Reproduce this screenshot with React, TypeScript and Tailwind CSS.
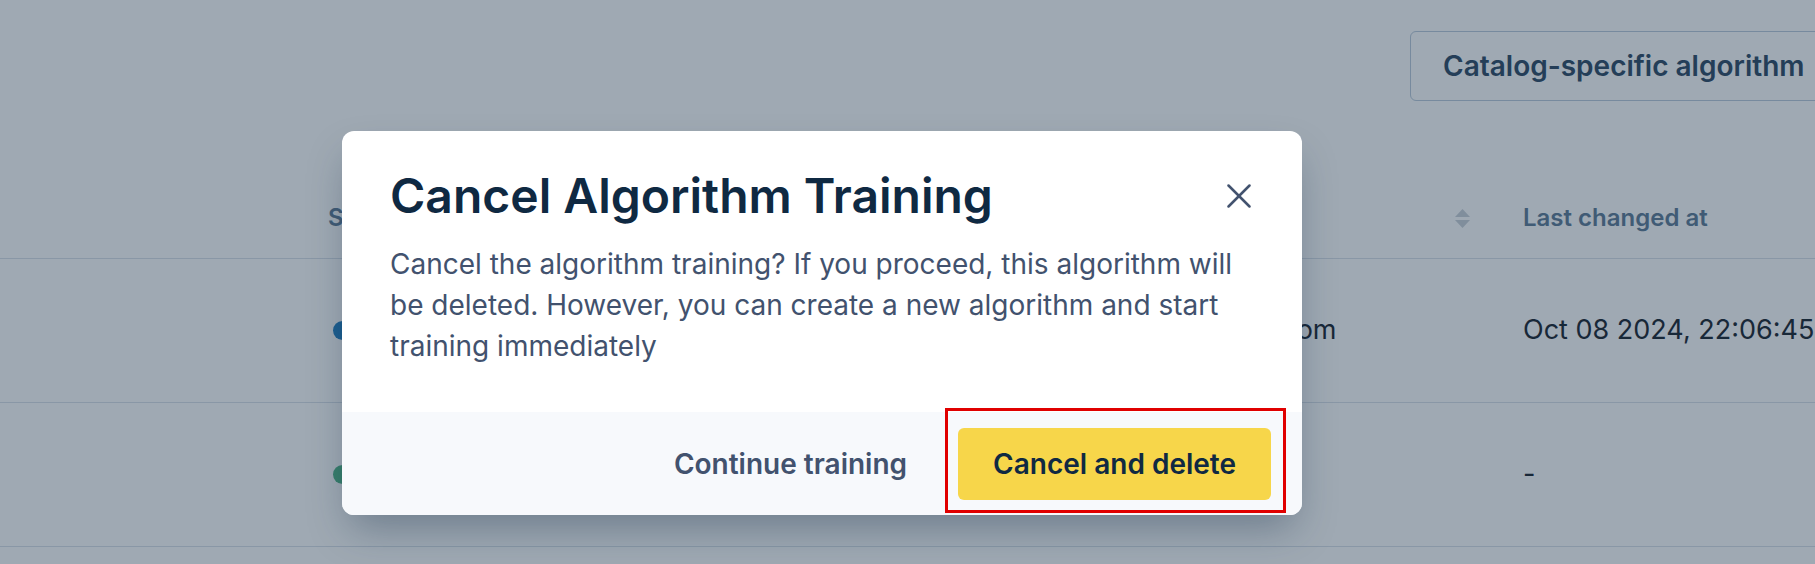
const SortIcon = () => (
    <svg width="15" height="19" viewBox="0 0 15 19" className="shrink-0">
        <path d="M7.5 0 L15 8 L0 8 Z" fill="#cbd2d9" />
        <path d="M7.5 19 L15 11 L0 11 Z" fill="#cbd2d9" />
    </svg>
);

const Row = ({ dot, email, changed }: { dot: string; email: string; changed: string }) => (
    <div className="flex h-[144px] items-center border-b-[1.5px] border-[#dbe2ea] text-[27px] text-[#1f2933]">
        <div className="w-[328px] shrink-0" />
        <div className="flex w-[646px] shrink-0 items-center">
            <span className={`ml-[5px] h-[19px] w-[19px] rounded-full ${dot}`} />
            <span className="ml-3">Training</span>
        </div>
        <div className="w-[549px] shrink-0">{email}</div>
        <div className="shrink-0">{changed}</div>
    </div>
);

const CancelTrainingDialog = () => (
    <div className="w-[960px] overflow-hidden whitespace-normal rounded-[12px] bg-white shadow-[0_20px_40px_-8px_rgba(15,41,66,0.35)]">
        <div className="flex items-center justify-between pl-[48px] pr-[51px] pt-[35px]">
            <h2 className="text-[48px] font-semibold leading-[60px] text-[#0f2942]">Cancel Algorithm Training</h2>
            <svg width="24" height="24" viewBox="0 0 24 24" fill="none" stroke="#42526e" strokeWidth="2.5" strokeLinecap="round">
                <path d="M1.5 1.5 L22.5 22.5" />
                <path d="M22.5 1.5 L1.5 22.5" />
            </svg>
        </div>
        <p className="px-[48px] pb-[45px] pt-[18px] text-[28px] leading-[41px] text-[#42526e]">
            Cancel the algorithm training? If you proceed, this algorithm will be deleted. However, you can create a new
            algorithm and start training immediately
        </p>
        <div className="flex items-center justify-end gap-4 bg-[#f7f9fc] pb-[15px] pr-[31px] pt-[16px]">
            <button className="h-[72px] whitespace-nowrap rounded-[6px] px-[35px] text-[28px] font-semibold text-[#42526e]">
                Continue training
            </button>
            <div className="relative">
                <button className="h-[72px] whitespace-nowrap rounded-[6px] bg-[#f7d64a] px-[35px] text-[28px] font-semibold text-[#0f2942]">
                    Cancel and delete
                </button>
                <div className="pointer-events-none absolute -bottom-[13px] -left-[13px] -right-[15px] -top-[20px] border-[3px] border-[#e00000]" />
            </div>
        </div>
    </div>
);

export default function App() {
    return (
        <div className="relative h-[564px] w-full overflow-hidden whitespace-nowrap bg-white font-['Inter','Noto_Sans',sans-serif]">
            {/* page underneath */}
            <div className="flex pt-[31px]">
                <div className="ml-[1410px] flex gap-4">
                    <button className="h-[70px] rounded-[6px] border-[1.5px] border-[#bcccdc] px-[32px] text-[28px] font-semibold text-[#334e68]">
                        Catalog-specific algorithm
                    </button>
                    <button className="h-[70px] rounded-[6px] bg-[#f7d64a] px-[32px] text-[28px] font-semibold text-[#0f2942]">
                        Create algorithm
                    </button>
                </div>
            </div>

            <div className="mt-[79px]">
                <div className="flex h-[79px] items-center border-b-[1.5px] border-[#dbe2ea] pb-[2px] text-[24px] font-semibold text-[#627d98]">
                    <div className="w-[328px] shrink-0" />
                    <div className="w-[646px] shrink-0">Status</div>
                    <div className="flex w-[549px] shrink-0 items-center justify-between pr-[53px]">
                        <span>Created by</span>
                        <SortIcon />
                    </div>
                    <div className="shrink-0">Last changed at</div>
                </div>
                <Row dot="bg-[#2680c2]" email="alex.morgan@company.com" changed="Oct 08 2024, 22:06:45" />
                <Row dot="bg-[#52b788]" email="-" changed="-" />
            </div>

            {/* overlay + dialog */}
            <div className="absolute inset-0 bg-[#0f2942]/40">
                <div className="pl-[342px] pt-[131px]">
                    <CancelTrainingDialog />
                </div>
            </div>
        </div>
    );
}
